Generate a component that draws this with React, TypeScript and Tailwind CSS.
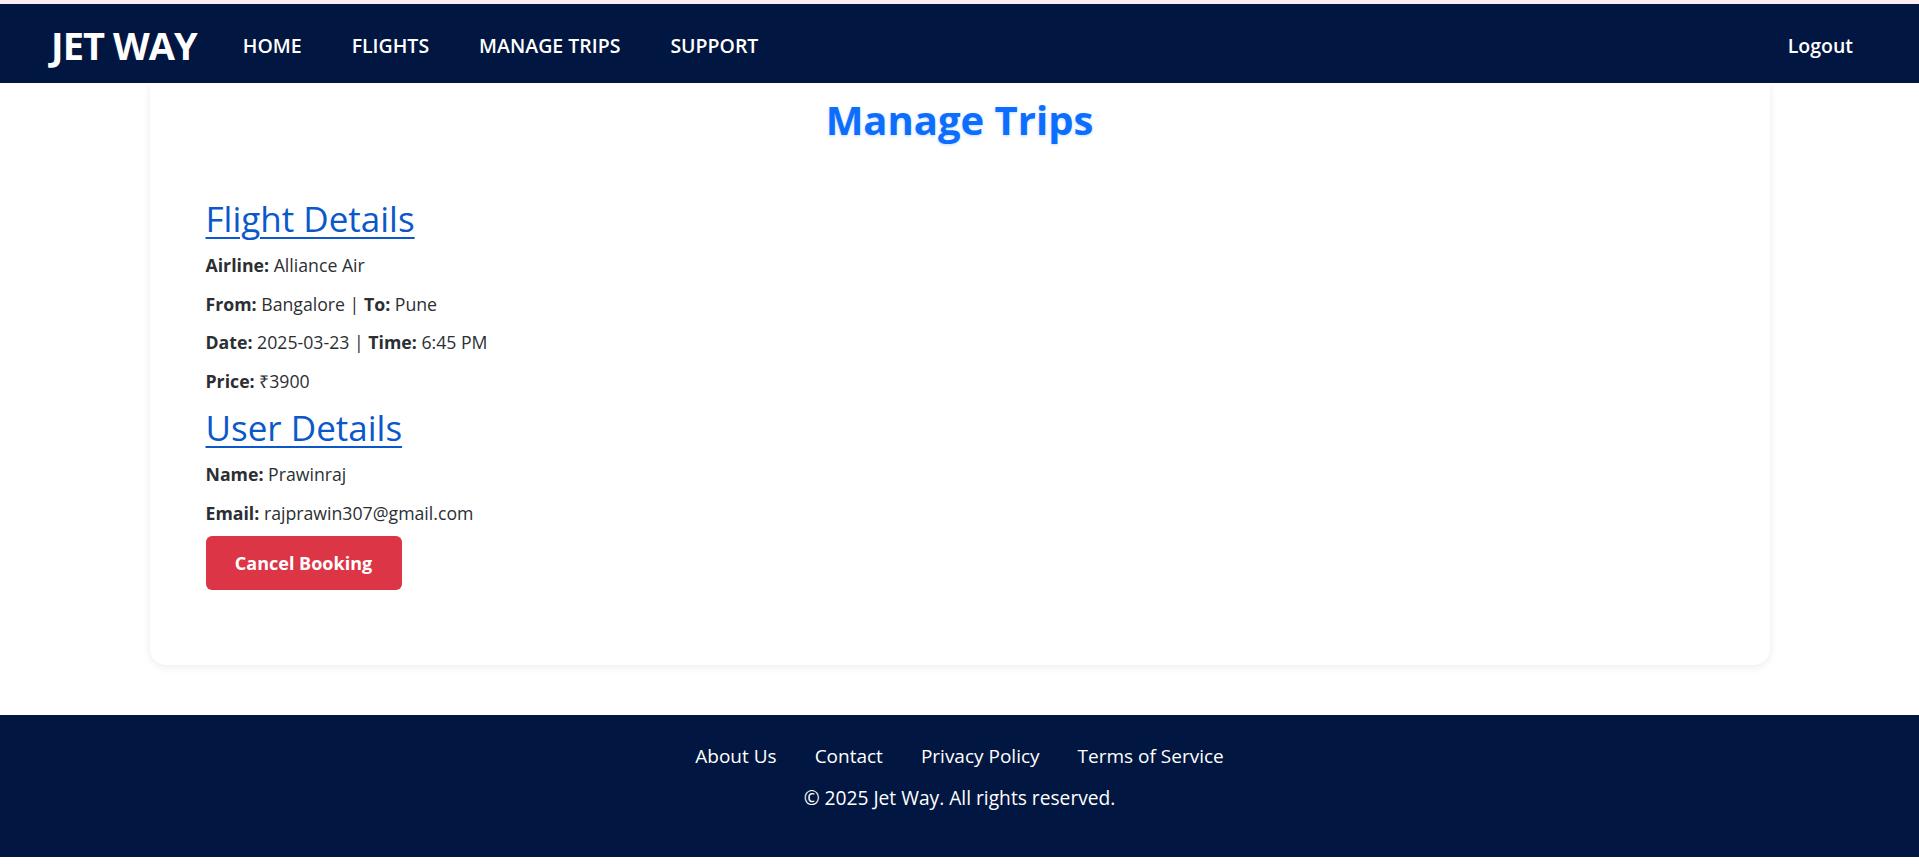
import React from 'react'

const navLinks = ['HOME', 'FLIGHTS', 'MANAGE TRIPS', 'SUPPORT']
const footerLinks = ['About Us', 'Contact', 'Privacy Policy', 'Terms of Service']

function Row({ label, value }: { label: string; value: React.ReactNode }) {
  return (
    <p className="text-[17.7px] leading-[25px] text-[#2b2f33] mb-[13.5px]">
      <span className="font-bold">{label}</span> {value}
    </p>
  )
}

export default function App() {
  return (
    <div className="min-h-[868px] bg-white font-['Open_Sans',sans-serif]">
      <div className="h-[4px] bg-[#fbeef1]" />
      <nav className="relative z-10 h-[79px] bg-[#011640] flex items-center pt-[4px] px-[51px]">
        <span className="text-[38px] font-bold text-white tracking-tight mr-[46px]">JET WAY</span>
        <ul className="flex items-center gap-[50px]">
          {navLinks.map((l) => (
            <li key={l} className="text-[19.5px] font-semibold text-white">
              {l}
            </li>
          ))}
        </ul>
        <span className="ml-auto mr-[15px] text-[19.5px] font-semibold text-white">Logout</span>
      </nav>

      <main className="w-[1620px] mx-auto bg-white rounded-b-2xl shadow-[0_2px_10px_rgba(0,0,0,0.08)] pt-[13px] pb-[75px] px-[56px]">
        <h1 className="text-center text-[40px] leading-[48px] font-bold text-[#0d6efd] [text-shadow:0_1px_3px_rgba(13,110,253,0.25)] mb-[54px]">
          Manage Trips
        </h1>

        <h2 className="text-[35px] leading-[41px] text-[#0a58ca] underline underline-offset-[5px] decoration-[2px] mb-[14px] w-fit">
          Flight Details
        </h2>
        <Row label="Airline:" value="Alliance Air" />
        <Row label="From:" value={<>Bangalore | <span className="font-bold">To:</span> Pune</>} />
        <Row label="Date:" value={<>2025-03-23 | <span className="font-bold">Time:</span> 6:45 PM</>} />
        <Row label="Price:" value="₹3900" />

        <h2 className="text-[35px] leading-[41px] text-[#0a58ca] underline underline-offset-[5px] decoration-[2px] mb-[14px] w-fit">
          User Details
        </h2>
        <Row label="Name:" value="Prawinraj" />
        <Row label="Email:" value="rajprawin307@gmail.com" />

        <button className="mt-[-3px] w-[196px] h-[54px] rounded-md bg-[#dc3545] text-white text-[18px] font-bold">
          Cancel Booking
        </button>
      </main>

      <footer className="mt-[50px] h-[142px] bg-[#011640] flex flex-col items-center pt-[28px]">
        <ul className="flex items-center gap-[38px]">
          {footerLinks.map((l) => (
            <li key={l} className="text-[19px] leading-[26px] text-white">
              {l}
            </li>
          ))}
        </ul>
        <p className="mt-[16px] text-[19.2px] leading-[26px] text-white">© 2025 Jet Way. All rights reserved.</p>
      </footer>
    </div>
  )
}
